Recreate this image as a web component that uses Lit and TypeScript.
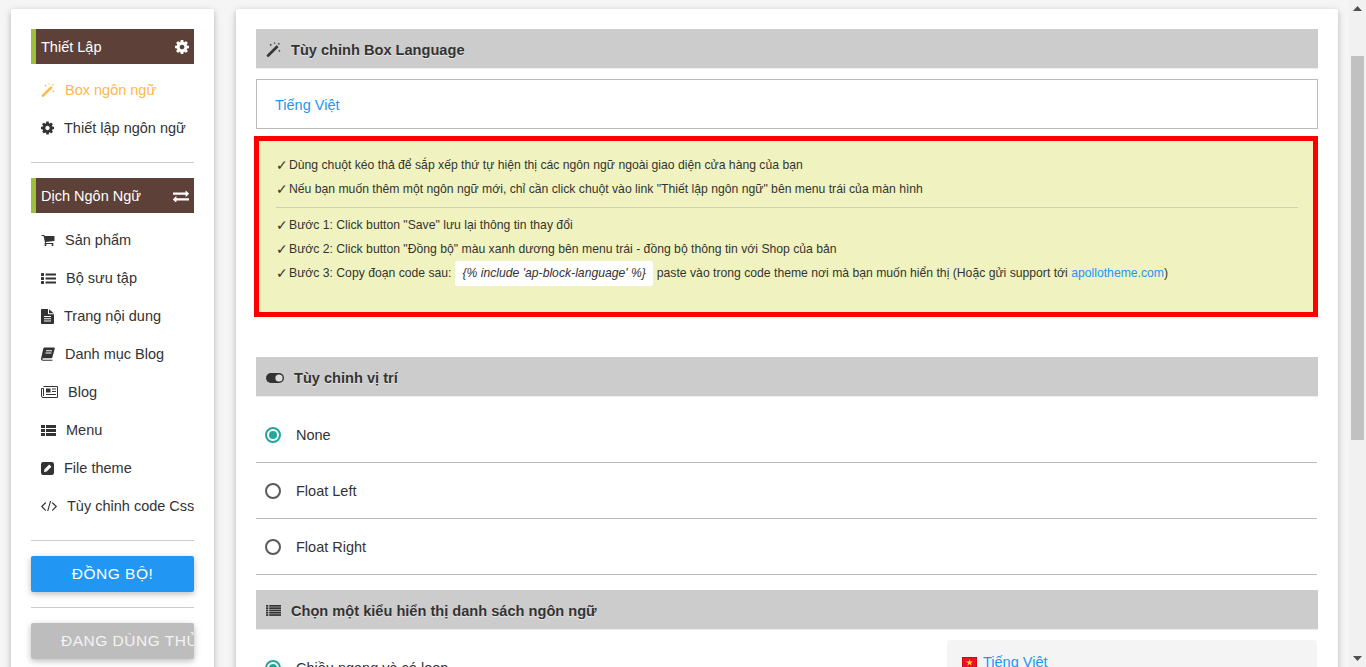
import { LitElement, html, css, svg } from "lit";
import { customElement } from "lit/decorators.js";

const fa = (w: number, vb: string, d: string, h = 14) =>
  html`<svg class="ic" width=${w} height=${h} viewBox=${vb} fill="currentColor"><path d=${d}></path></svg>`;

const COG = "M1152 896q0-106-75-181t-181-75-181 75-75 181 75 181 181 75 181-75 75-181zm512-109v222q0 12-8 23t-20 13l-185 28q-19 54-39 91 35 50 107 138 10 12 10 25t-9 23q-27 37-99 108t-94 71q-12 0-26-9l-138-108q-44 23-91 38-16 136-29 186-7 28-36 28h-222q-14 0-24.500-8.500t-11.500-21.500l-28-184q-49-16-90-37l-141 107q-10 9-25 9-14 0-25-11-126-114-165-168-7-10-7-23 0-12 8-23 15-21 51-66.500t54-70.500q-27-50-41-99l-183-27q-13-2-21-12.500t-8-23.500v-222q0-12 8-23t19-13l186-28q14-46 39-92-40-57-107-138-10-12-10-24 0-10 9-23 26-36 98.500-107.500t94.500-71.500q13 0 26 10l138 107q44-23 91-38 16-136 29-186 7-28 36-28h222q14 0 24.500 8.500t11.500 21.500l28 184q49 16 90 37l142-107q9-9 24-9 13 0 25 10 129 119 165 170 7 8 7 22 0 12-8 23-15 21-51 66.500t-54 70.500q26 50 41 98l183 28q13 2 21 12.500t8 23.500z";
const CART = "M704 1536q0 52-38 90t-90 38-90-38-38-90 38-90 90-38 90 38 38 90zm896 0q0 52-38 90t-90 38-90-38-38-90 38-90 90-38 90 38 38 90zm128-1088v512q0 24-16.500 42.500t-40.500 21.500l-1044 122q13 60 13 70 0 16-24 64h920q26 0 45 19t19 45-19 45-45 19h-1024q-26 0-45-19t-19-45q0-11 8-31.500t16-36 21.500-40 15.500-29.500l-177-823h-204q-26 0-45-19t-19-45 19-45 45-19h256q16 0 28.500 6.500t19.500 15.500 13 24.500 8 26 5.500 29.500 4.500 26h1201q26 0 45 19t19 45z";
const EXCHANGE = "M1792 1184v192q0 13-9.500 22.500t-22.500 9.500h-1376v192q0 13-9.500 22.500t-22.500 9.500q-12 0-24-10l-319-320q-9-9-9-22 0-14 9-23l320-320q9-9 23-9 13 0 22.500 9.500t9.500 22.500v192h1376q13 0 22.500 9.500t9.500 22.500zm0-544q0 14-9 23l-320 320q-9 9-23 9-13 0-22.500-9.500t-9.500-22.500v-192h-1376q-13 0-22.500-9.500t-9.500-22.500v-192q0-13 9.500-22.500t22.500-9.500h1376v-192q0-14 9-23t23-9q12 0 24 10l319 319q9 9 9 23z";
const CODE = "M553 1399l-50 50q-10 10-23 10t-23-10l-466-466q-10-10-10-23t10-23l466-466q10-10 23-10t23 10l50 50q10 10 10 23t-10 23l-393 393 393 393q10 10 10 23t-10 23zm591-1067l-373 1291q-4 13-15.500 19.500t-23.500 2.500l-62-17q-13-4-19.500-15.500t-2.500-24.500l373-1291q4-13 15.500-19.500t23.500-2.500l62 17q13 4 19.500 15.500t2.500 24.500zm657 651l-466 466q-10 10-23 10t-23-10l-50-50q-10-10-10-23t10-23l393-393-393-393q-10-10-10-23t10-23l50-50q10-10 23-10t23 10l466 466q10 10 10 23t-10 23z";

const cogIcon = (w = 13, h = 14) => fa(w, "128 128 1536 1536", COG, h);
const wand = (w = 15, h = 15) => html`<svg class="ic" width=${w} height=${h} viewBox="0 0 14 14" fill="currentColor">
  <path d="M0.600 12.300 9.600 3.300a.5.5 0 0 1 .7 0l1.100 1.100a.5.5 0 0 1 0 .7L2.400 14a.5.5 0 0 1-.7 0L.6 12.900a.5.5 0 0 1 0-.6z"></path>
  <path d="M4.500 1.300 4.900 2.300 5.900 2.700 4.900 3.100 4.500 4.100 4.100 3.100 3.100 2.700 4.100 2.300zM12 .5l.4.9.9.4-.9.4-.4.9-.4-.9-.9-.4.9-.4zM12.400 7l.4.9.9.4-.9.4-.4.9-.4-.9-.9-.4.9-.4zM8 0l.3.7.7.3-.7.3-.3.7-.3-.7-.7-.3.7-.3z"></path>
</svg>`;
const listIcon = (w = 15, h = 11) => html`<svg class="ic" width=${w} height=${h} viewBox="0 0 15 11" fill="currentColor">
  ${[0, 4, 8].map((y) => svg`<rect x="0" y=${y} width="3" height="3" rx=".6"></rect><rect x="4.500" y=${y + 0.4} width="10.500" height="2.200" rx=".4"></rect>`)}
</svg>`;
const fileIcon = html`<svg class="ic" width="13" height="15" viewBox="0 0 13 15" fill="currentColor">
  <path fill-rule="evenodd" d="M0 .8Q0 0 .8 0H7v4.500q0 .7.7.7H13v9q0 .8-.8.8H.8Q0 15 0 14.200zM3 7v1h7V7zm0 2.300v1h7v-1zm0 2.300v1h7v-1z"></path>
  <path d="M8 0.200 12.800 4.300H8.300q-.3 0-.3-.3z"></path>
</svg>`;
const bookIcon = html`<svg class="ic" width="14" height="14" viewBox="0 0 14 14" fill="currentColor">
  <path fill-rule="evenodd" d="M3.500.4H13q1 0 .8 1l-2.500 9q-.2.8-1.100.8H2.200q-.9 0-.9.8t.9.8h9.300l.2.300q-.1.700-.9.700H1.800Q0 13.800 0 12q0-.5.200-1.100L2.300 1.500Q2.500.4 3.500.4zM5 3.200v1h6v-1zM4.500 5.500v1h6v-1z"></path>
</svg>`;
const newsIcon = html`<svg class="ic" width="17" height="12" viewBox="0 0 17 12" fill="none" stroke="currentColor">
  <path d="M2.500 .5H16.500V11.500H2a1.500 1.500 0 0 1-1.500-1.500V2.500h2V10"></path>
  <rect x="5" y="2.500" width="4.500" height="4" fill="currentColor" stroke="none"></rect>
  <path d="M11 3h4M11 5.500h4M5 8.500h10"></path>
</svg>`;
const thList = html`<svg class="ic" width="15" height="11" viewBox="0 0 15 11" fill="currentColor">
  ${[0, 4, 8].map((y) => svg`<rect x="0" y=${y} width="4" height="3"></rect><rect x="5" y=${y} width="10" height="3"></rect>`)}
</svg>`;
const pencilSq = html`<svg class="ic" width="13" height="13" viewBox="0 0 13 13" fill="currentColor">
  <path fill-rule="evenodd" d="M2.200 0H10.800Q13 0 13 2.200V10.800Q13 13 10.800 13H2.200Q0 13 0 10.800V2.200Q0 0 2.200 0zM8.200 2.600 3.500 7.300 3 10 5.700 9.500 10.400 4.800z"></path>
</svg>`;
const toggleOn = html`<svg class="ic" width="18" height="10" viewBox="0 0 18 10">
  <rect width="18" height="10" rx="5" fill="#333"></rect><circle cx="13" cy="5" r="3.600" fill="#ddd"></circle>
</svg>`;
const listAlt = html`<svg class="ic" width="15" height="12" viewBox="0 0 15 12" fill="currentColor">
  ${[0, 2.300, 4.600, 6.900, 9.200].map((y) => svg`<rect x="0" y=${y} width="2.300" height="1.700"></rect><rect x="3.200" y=${y} width="11.800" height="1.700"></rect>`)}
</svg>`;

const menu = [
  { t: "Sản phẩm", i: fa(14, "0 256 1792 1408", CART, 11) },
  { t: "Bộ sưu tập", i: listIcon() },
  { t: "Trang nội dung", i: fileIcon },
  { t: "Danh mục Blog", i: bookIcon },
  { t: "Blog", i: newsIcon },
  { t: "Menu", i: thList },
  { t: "File theme", i: pencilSq },
  { t: "Tùy chỉnh code Css", i: fa(16, "0 320 1792 1152", CODE, 10) },
];

@customElement("app-root")
export class AppRoot extends LitElement {
  static styles = css`
    :host { display: flex; height: 667px; overflow: hidden; background: #f5f5f5; color: #333;
      font-family: "Liberation Sans", Arial, sans-serif; font-size: 14.500px; }
    * { box-sizing: border-box; }
    .ic { flex: none; display: block; }
    .card { background: #fff; border-radius: 2px; box-shadow: 0 2px 5px 0 rgba(0,0,0,.16), 0 2px 10px 0 rgba(0,0,0,.12); padding: 20px; flex: none; align-self: flex-start; }
    .side { width: 203px; margin: 9px 22px 0 11px; min-height: 800px; }
    .main { width: 1102px; margin: 9px 11px 0 0; min-height: 800px; }
    .sb-head { height: 35px; display: flex; align-items: center; justify-content: space-between; background: #5d4037; color: #fff; border-left: 5px solid #9dc03a; padding: 0 5px; }
    .sb-head.mt { margin-top: 15px; }
    .items { padding-top: 7px; }
    .item { height: 38px; display: flex; align-items: center; gap: 10px; padding-left: 10px; white-space: nowrap; overflow: hidden; color: #333; }
    .item.active { color: #ffb74d; }
    .sb-list { padding-top: 8px; }
    hr { border: 0; border-top: 1px solid #ccc; margin: 0; }
    .d1 { margin-top: 15px; }
    .d2 { margin-top: 15px; }
    .d3 { margin-top: 15px; }
    .btn { margin-top: 15px; height: 36px; padding-bottom: 1px; border-radius: 2px; display: flex; align-items: center; white-space: nowrap; overflow: hidden; font-size: 15.500px; letter-spacing: .5px; color: #fff; box-shadow: 0 2px 5px 0 rgba(0,0,0,.16), 0 2px 10px 0 rgba(0,0,0,.12); }
    .btn.blue { background: #2196f3; justify-content: center; }
    .btn.gray { background: #bdbdbd; color: #f3f3f3; padding-left: 30px; }
    .head { height: 40px; display: flex; align-items: center; gap: 10px; padding: 2px 10px 0; background: #ccc; border-bottom: 1px solid #eee; font-weight: 700; font-size: 14.600px; color: #333; text-shadow: 0 1px 1px rgba(255,255,255,.6); }
    .lang { height: 50px; margin-top: 10px; border: 1px solid #bbb; display: flex; align-items: center; padding: 2px 0 0 18px; color: #2196f3; }
    a { color: #2196f3; text-decoration: none; }
    .note { margin: 7px 0 0 -2px; height: 181px; border: 5px solid #f00; background: #f0f3c0; padding: 12px 15px 0 17px; font-size: 12.200px; color: #333; }
    .line { height: 24px; display: flex; align-items: center; white-space: pre; }
    .check { font-family: "DejaVu Sans", sans-serif; font-size: 14px; width: 13px; flex: none; }
    .note hr { margin: 6px 0 5px; }
    .chip { background: #fff; height: 25px; padding: 0 7.500px; border-radius: 2px; display: inline-flex; align-items: center; font-style: italic; }
    .head.gap { margin-top: 40px; }
    .row { height: 56px; display: flex; align-items: center; gap: 15px; padding-left: 9px; border-bottom: 1px solid #bbb; margin-right: 1px; }
    .rows { padding-top: 10px; }
    .radio { flex: none; width: 16px; height: 16px; border: 2px solid #5a5a5a; border-radius: 50%; display: flex; align-items: center; justify-content: center; }
    .radio.on { border-color: #26a69a; }
    .radio.on::after { content: ""; width: 8px; height: 8px; border-radius: 50%; background: #26a69a; }
    .head.next { margin-top: 15px; }
    .split { display: flex; justify-content: space-between; padding-top: 10px; }
    .split .row { flex: 1; border: 0; align-items: center; }
    .panel { width: 370px; height: 200px; margin-right: 1px; background: #f4f4f4; border-radius: 3px; padding: 14px 15px; display: flex; gap: 6px; align-items: flex-start; flex: none; }
    .flag { flex: none; margin-top: 3px; }
    .scroll { width: 17px; flex: none; background: #f1f1f1; position: relative; display: flex; flex-direction: column; align-items: center; }
    .arrow { height: 17px; flex: none; display: flex; align-items: center; justify-content: center; }
    .track { flex: 1; width: 100%; padding: 39px 2px 0; }
    .thumb { height: 384px; background: #c1c1c1; }
  `;

  render() {
    const ck = html`<span class="check">✓</span>`;
    return html`
      <aside class="card side">
        <div class="sb-head"><span>Thiết Lập</span>${cogIcon(14, 14)}</div>
        <div class="items">
          <div class="item active">${wand(14, 14)}<span>Box ngôn ngữ</span></div>
          <div class="item">${cogIcon()}<span>Thiết lập ngôn ngữ</span></div>
        </div>
        <hr class="d1" />
        <div class="sb-head mt"><span>Dịch Ngôn Ngữ</span>${fa(16, "0 224 1792 1344", EXCHANGE, 12)}</div>
        <div class="sb-list">
          ${menu.map((m) => html`<div class="item">${m.i}<span>${m.t}</span></div>`)}
        </div>
        <hr class="d2" />
        <div class="btn blue">ĐỒNG BỘ!</div>
        <hr class="d3" />
        <div class="btn gray">ĐANG DÙNG THỬ</div>
      </aside>
      <main class="card main">
        <div class="head">${wand()}<span>Tùy chỉnh Box Language</span></div>
        <div class="lang"><a>Tiếng Việt</a></div>
        <section class="note">
          <div class="line">${ck}Dùng chuột kéo thả để sắp xếp thứ tự hiện thị các ngôn ngữ ngoài giao diện cửa hàng của bạn</div>
          <div class="line">${ck}Nếu bạn muốn thêm một ngôn ngữ mới, chỉ cần click chuột vào link "Thiết lập ngôn ngữ" bên menu trái của màn hình</div>
          <hr />
          <div class="line">${ck}Bước 1: Click button "Save" lưu lại thông tin thay đổi</div>
          <div class="line">${ck}Bước 2: Click button "Đồng bộ" màu xanh dương bên menu trái - đồng bộ thông tin với Shop của bản</div>
          <div class="line">${ck}Bước 3: Copy đoạn code sau: <span class="chip">{% include 'ap-block-language' %}</span> paste vào trong code theme nơi mà bạn muốn hiển thị (Hoặc gửi support tới <a>apollotheme.com</a>)</div>
        </section>
        <div class="head gap">${toggleOn}<span>Tùy chỉnh vị trí</span></div>
        <div class="rows">
          <div class="row"><span class="radio on"></span><span>None</span></div>
          <div class="row"><span class="radio"></span><span>Float Left</span></div>
          <div class="row"><span class="radio"></span><span>Float Right</span></div>
        </div>
        <div class="head next">${listAlt}<span>Chọn một kiểu hiển thị danh sách ngôn ngữ</span></div>
        <div class="split">
          <div class="row"><span class="radio on"></span><span>Chiều ngang và có loop</span></div>
          <div class="panel">
            <svg class="flag" width="15" height="11" viewBox="0 0 15 11"><rect width="15" height="11" fill="#e8112d" stroke="#b00" stroke-width="1"></rect><path d="M7.500 2 8.300 4.500H11L8.800 6 9.600 8.500 7.500 7 5.400 8.500 6.200 6 4 4.500H6.700z" fill="#ffe000"></path></svg>
            <a>Tiếng Việt</a>
          </div>
        </div>
      </main>
      <div class="scroll">
        <div class="arrow"><svg width="9" height="5" viewBox="0 0 9 5" fill="#505050"><path d="M4.500 0 9 5H0z"></path></svg></div>
        <div class="track"><div class="thumb"></div></div>
        <div class="arrow"><svg width="9" height="5" viewBox="0 0 9 5" fill="#505050"><path d="M0 0H9L4.500 5z"></path></svg></div>
      </div>
    `;
  }
}
